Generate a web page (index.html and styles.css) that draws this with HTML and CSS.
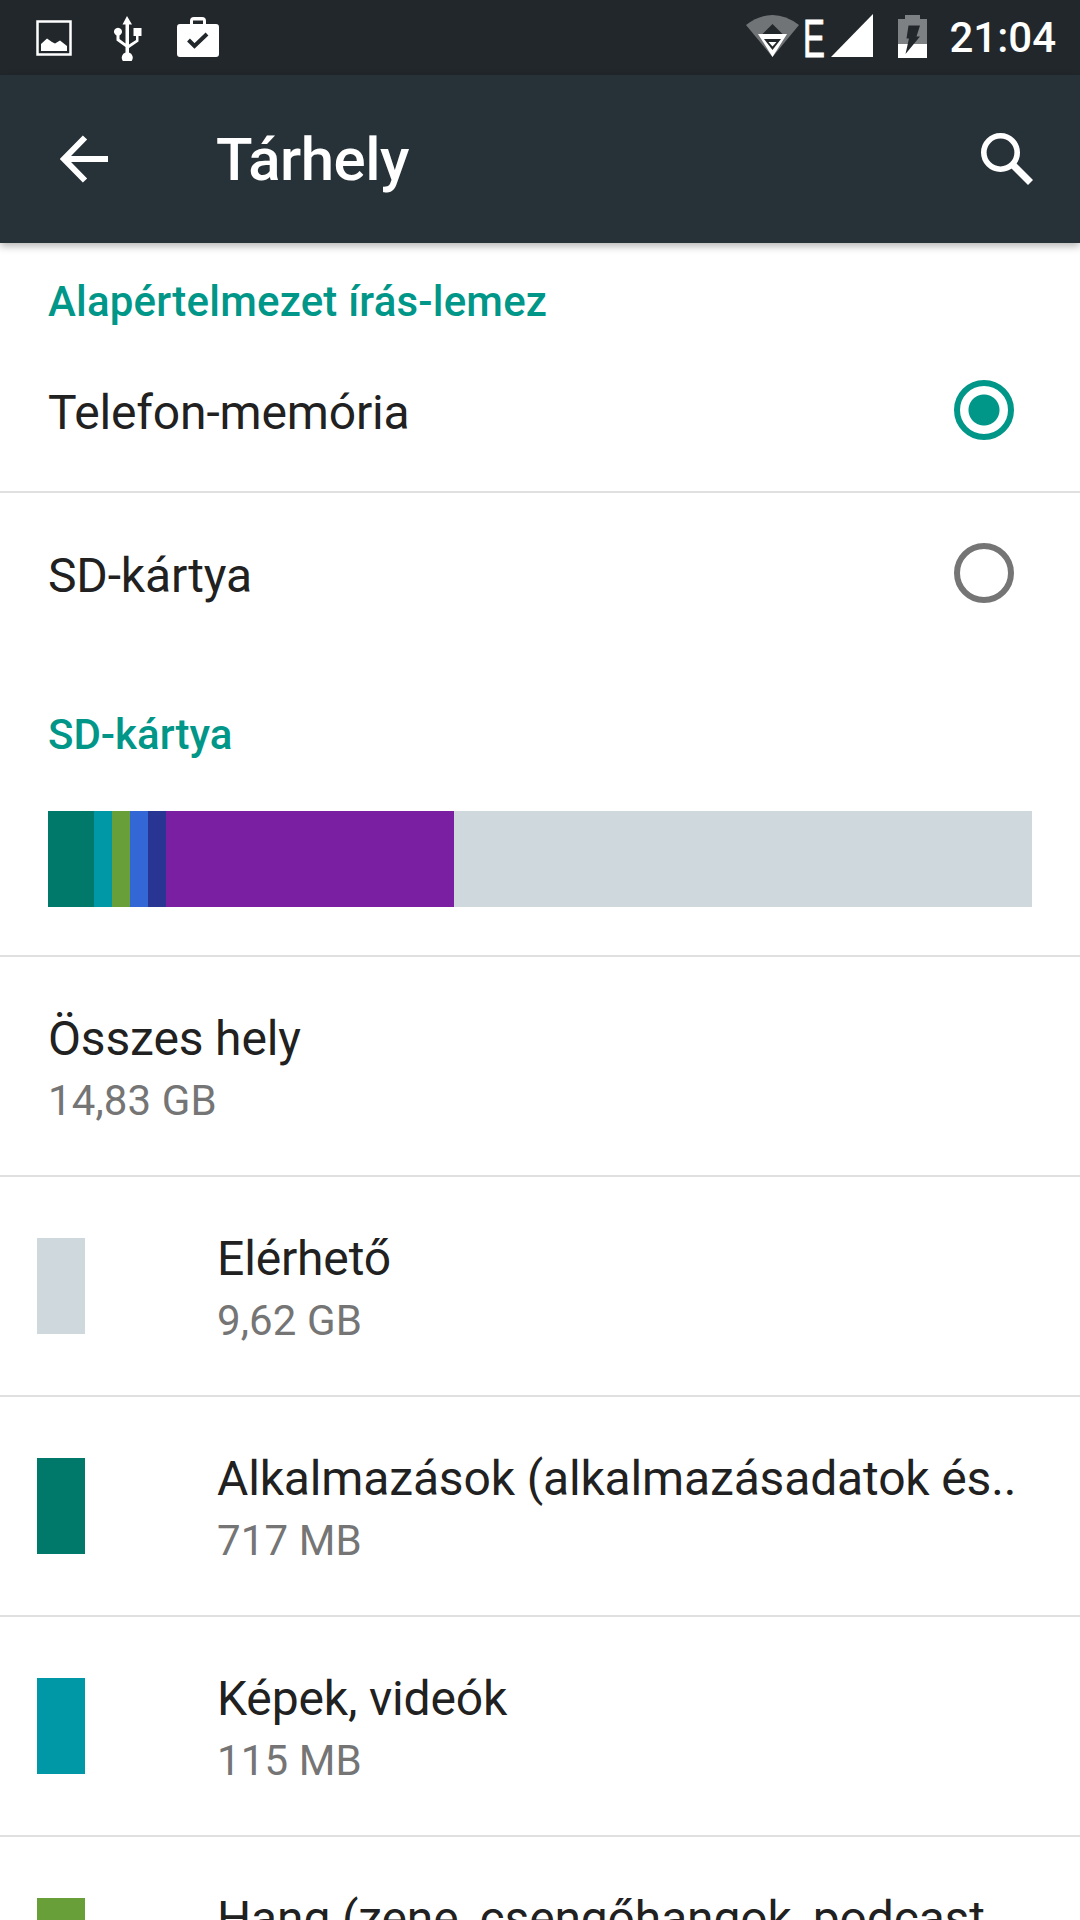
FILE: index.html
```html
<!DOCTYPE html>
<html lang="hu">
<head>
<meta charset="utf-8">
<title>Tárhely</title>
<link rel="stylesheet" href="styles.css">
</head>
<body>
<div class="screen">
  <header class="statusbar">
    <div class="status-left">
      <svg class="ic-image" viewBox="0 0 36 36"><rect x="1.500" y="1.500" width="33" height="33" fill="none" stroke="#fff" stroke-width="2.500"/><path d="M5 31V24L11 18.500L16 22L19 23.500L24 20.500L31 26V31Z" fill="#fff"/></svg>
      <svg class="ic-usb" viewBox="0 0 30 45"><path d="M15 0L20 8.500H17V28.500L24 24V20H21.500V12H29.500V20H26.500V25.500L17 32V36.500A5.500 5.500 0 1 1 13.500 36.500V31L4.500 24.500V19.500A4 4 0 1 1 7.500 19.500V23L13.500 27.500V8.500H10.500Z" fill="#fff"/></svg>
      <svg class="ic-work" viewBox="0 0 42 40"><path d="M3 7H13V4Q13 0 17 0H25Q29 0 29 4V7H39Q42 7 42 10V37Q42 40 39 40H3Q0 40 0 37V10Q0 7 3 7ZM16 7H26V3.500H16Z" fill="#fff" fill-rule="evenodd"/><path d="M11.500 23L17.500 29L30 17" fill="none" stroke="#22272b" stroke-width="4"/></svg>
    </div>
    <div class="status-right">
      <svg class="ic-wifi" viewBox="0 0 53 42"><path d="M0 10Q26.500 -10 53 10L26.500 42Z" fill="#fff" fill-opacity=".36"/><path d="M12 19H41L26.500 42Z" fill="#fff"/><path d="M26.500 9L36.500 19H16.500Z" fill="#22272b"/><path d="M18 24H35L26.500 35Z" fill="#22272b"/><path d="M22.500 27H30.500L26.500 31.500Z" fill="#fff"/></svg>
      <span class="net-letter">E</span>
      <svg class="ic-signal" viewBox="0 0 42 43"><path d="M42 0V43H0Z" fill="#fff"/></svg>
      <svg class="ic-battery" viewBox="0 0 29 43"><path d="M7 0H22V4H29V43H0V4H7Z" fill="#fff" fill-opacity=".42"/><path d="M0 29H29V43H0Z" fill="#fff"/><path d="M10.500 10.500H22L18.500 21.500H22L7.500 39L11 23.500H8.500Z" fill="#22272b"/></svg>
      <span class="clock">21:04</span>
    </div>
  </header>
  <nav class="toolbar">
    <svg class="ic-back" viewBox="0 0 48 48"><path d="M48 24H5M25 2.500L4 24L25 45.500" fill="none" stroke="#fff" stroke-width="6"/></svg>
    <h1 class="toolbar-title">Tárhely</h1>
    <svg class="ic-search" viewBox="0 0 52 52"><circle cx="19.500" cy="19.500" r="16.700" fill="none" stroke="#fff" stroke-width="5.600"/><path d="M31 31L49.500 49.500" stroke="#fff" stroke-width="7"/></svg>
  </nav>
  <main class="content">
    <h2 class="section-title first">Alapértelmezet írás-lemez</h2>
    <div class="radio-row divided">
      <span class="primary">Telefon-memória</span>
      <span class="radio on"></span>
    </div>
    <div class="radio-row second">
      <span class="primary">SD-kártya</span>
      <span class="radio"></span>
    </div>
    <h2 class="section-title storage">SD-kártya</h2>
    <div class="bar-wrap">
      <div class="bar">
        <i class="seg teal w46"></i><i class="seg cyan w18"></i><i class="seg green w18"></i><i class="seg blue w18"></i><i class="seg indigo w18"></i><i class="seg purple w288"></i><i class="seg free"></i>
      </div>
    </div>
    <div class="row total">
      <div class="texts">
        <div class="primary">Összes hely</div>
        <div class="secondary">14,83 GB</div>
      </div>
    </div>
    <div class="row">
      <span class="swatch free"></span>
      <div class="texts">
        <div class="primary">Elérhető</div>
        <div class="secondary">9,62 GB</div>
      </div>
    </div>
    <div class="row">
      <span class="swatch teal"></span>
      <div class="texts">
        <div class="primary">Alkalmazások (alkalmazásadatok és..</div>
        <div class="secondary">717 MB</div>
      </div>
    </div>
    <div class="row">
      <span class="swatch cyan"></span>
      <div class="texts">
        <div class="primary">Képek, videók</div>
        <div class="secondary">115 MB</div>
      </div>
    </div>
    <div class="row last">
      <span class="swatch green"></span>
      <div class="texts">
        <div class="primary">Hang (zene, csengőhangok, podcast</div>
      </div>
    </div>
  </main>
</div>
</body>
</html>
```
FILE: styles.css
```css
* { box-sizing: border-box; }
html, body { margin: 0; padding: 0; }
body { background: #fff; font-family: Roboto, "Noto Sans", sans-serif; color: #212121; }
.screen { width: 1080px; height: 1920px; overflow: hidden; display: flex; flex-direction: column; background: #fff; }

.statusbar { height: 75px; flex: none; background: #22272b; display: flex; align-items: flex-start; justify-content: space-between; padding: 14px 24px 0 36px; }
.status-left { display: flex; align-items: flex-start; }
.status-right { display: flex; align-items: flex-start; }
.ic-image { width: 36px; height: 36px; margin: 6px 40px 0 0; }
.ic-usb { width: 30px; height: 45px; margin: 2px 35px 0 0; }
.ic-work { width: 42px; height: 40px; margin-top: 3px; }
.ic-wifi { width: 53px; height: 42px; margin-top: 1px; }
.net-letter { font-family: "Liberation Sans", sans-serif; font-size: 53px; line-height: 44px; height: 44px; color: #fff; width: 19px; margin: 3px 9px 0 4px; transform: scaleX(.62); transform-origin: left center; -webkit-text-stroke: 1px #fff; }
.ic-signal { width: 42px; height: 43px; }
.ic-battery { width: 29px; height: 43px; margin: 1px 0 0 25px; }
.clock { font-size: 42px; font-weight: 500; color: #fff; margin: 2px 0 0 22px; line-height: 44px; }

.toolbar { height: 168px; flex: none; background: #263238; display: flex; align-items: center; padding: 0 47px 0 60px; box-shadow: 0 3px 8px rgba(0,0,0,.3); position: relative; }
.ic-back { width: 48px; height: 48px; flex: none; }
.toolbar-title { margin: 0 0 0 108px; flex: 1; font-size: 60px; font-weight: 500; color: #fff; letter-spacing: -.5px; }
.ic-search { width: 52px; height: 52px; flex: none; }

.content { flex: 1; min-height: 0; }
.section-title { margin: 0; padding: 0 48px; font-size: 42px; font-weight: 500; line-height: 56px; color: #009688; letter-spacing: .2px; }
.section-title.first { padding-top: 31px; height: 86px; }
.section-title.storage { letter-spacing: 0; }
.radio-row { display: flex; align-items: center; justify-content: space-between; padding: 0 66px 0 48px; }
.radio-row.divided { height: 164px; border-bottom: 2px solid #e0e0e0; }
.radio-row.divided .primary { padding-top: 6px; }
.radio-row.second { height: 160px; margin-bottom: 54px; }
.radio-row.second .primary { padding-top: 6px; }
.primary { font-size: 48px; line-height: 64px; color: #212121; white-space: nowrap; letter-spacing: -.15px; }
.secondary { font-size: 42px; line-height: 56px; color: #757575; white-space: nowrap; margin-top: 2px; letter-spacing: .12px; }
.radio { width: 60px; height: 60px; border-radius: 50%; border: 6px solid #757575; display: block; }
.radio.on { border-color: #009688; background: radial-gradient(circle, #009688 0 15px, #fff 16px); }

.bar-wrap { padding: 48px 48px 48px; border-bottom: 2px solid #e0e0e0; }
.bar { height: 96px; display: flex; }
.seg { display: block; flex: none; height: 100%; }
.seg.free { flex: 1; }
.w46 { width: 46px; }
.w18 { width: 18px; }
.w288 { width: 288px; }
.teal { background: #00796b; }
.cyan { background: #0097a7; }
.green { background: #689f38; }
.blue { background: #3367d6; }
.indigo { background: #283593; }
.purple { background: #7b1fa2; }
.free { background: #cfd8dc; }

.row { height: 220px; display: flex; align-items: flex-start; padding: 61px 0 0 37px; border-bottom: 2px solid #e0e0e0; }
.row.last { border-bottom: 0; }
.row.total { padding-left: 48px; }
.swatch { width: 48px; height: 96px; flex: none; margin-right: 132px; }
.texts { margin-top: -11px; min-width: 0; }
```
